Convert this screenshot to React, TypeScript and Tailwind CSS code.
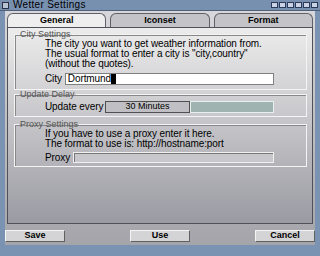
export default function App() {
  return (
    <div
      className="flex h-[256px] w-[320px] flex-col overflow-hidden bg-[#7b93b3] text-black"
      style={{ fontFamily: '"Liberation Sans", Arial, sans-serif' }}
    >
      {/* Title bar */}
      <div className="flex h-[11px] items-center border-b border-[#50607a] bg-[#7890b0] px-[2px]">
        <div className="h-[7px] w-[7px] border border-[#2a3040] bg-[#b8c4d4]" />
        <span className="ml-[4px] text-[10px] leading-[10px] tracking-[0.3px]">Wetter Settings</span>
        <div className="ml-auto flex gap-[1px]">
          {[0, 1, 2, 3, 4, 5].map((i) => (
            <div key={i} className="h-[6px] w-[7px] border border-[#2a3a58] bg-[#c8d4e4]" />
          ))}
        </div>
      </div>

      {/* Window body */}
      <div className="mx-[5px] flex h-[234px] flex-col whitespace-nowrap bg-gradient-to-b from-[#d8d8dc] to-[#a4a4aa] pt-[2px] tracking-[-0.1px]">
        {/* Tabs */}
        <div className="flex h-[14px] gap-[4px] px-[2px] tracking-normal">
          <div className="flex flex-1 items-center justify-center rounded-t-[6px] border border-b-0 border-[#606068] bg-[#eeeeee] text-[9px] font-bold">
            General
          </div>
          <div className="flex flex-1 items-center justify-center rounded-t-[6px] border border-b-0 border-[#606068] bg-[#c4c4c8] text-[9px] font-bold">
            Iconset
          </div>
          <div className="flex flex-1 items-center justify-center rounded-t-[6px] border border-b-0 border-[#606068] bg-[#c4c4c8] text-[9px] font-bold">
            Format
          </div>
        </div>

        {/* Tab page */}
        <div className="mx-[2px] flex h-[197px] flex-col border border-[#505058] bg-gradient-to-b from-[#ececec] via-[#c4c4c8] to-[#9a9aa2] pl-[6px] pr-[5px] pt-[2px]">
          {/* City Settings */}
          <fieldset className="min-w-0 border border-[#f4f4f4] pb-[3px] pl-[30px] pr-[32px] shadow-[inset_1px_1px_0_#888]">
            <legend className="-ml-[26px] px-[1px] text-[9px] leading-[9px] tracking-normal text-[#555]">City Settings</legend>
            <div className="text-[10px] leading-[10px]">
              <p>The city you want to get weather information from.</p>
              <p>The usual format to enter a city is "city,country"</p>
              <p>(without the quotes).</p>
            </div>
            <div className="mt-[2px] flex items-center gap-[3px] text-[10px]">
              <span>City</span>
              <div className="flex h-[12px] flex-1 items-center border border-[#808080] bg-white pl-[2px] leading-[10px]">
                Dortmund
                <span className="inline-block h-[10px] w-[5px] bg-black" />
              </div>
            </div>
          </fieldset>

          {/* Update Delay */}
          <fieldset className="min-w-0 border border-[#f4f4f4] pb-[2px] pl-[30px] pr-[32px] shadow-[inset_1px_1px_0_#888]">
            <legend className="-ml-[26px] px-[1px] text-[9px] leading-[9px] tracking-normal text-[#555]">Update Delay</legend>
            <div className="flex items-center text-[10px]">
              <span className="w-[60px] shrink-0">Update every</span>
              <div className="flex h-[12px] w-[85px] shrink-0 items-center justify-center border border-[#505050] bg-[#c0c0c4] text-[9px] tracking-normal">
                30 Minutes
              </div>
              <div className="h-[12px] flex-1 border border-[#e8f0ee] bg-[#9fb3b0]" />
            </div>
          </fieldset>

          {/* Proxy Settings */}
          <fieldset className="mt-[3px] min-w-0 border border-[#f4f4f4] pb-[1px] pl-[30px] pr-[32px] shadow-[inset_1px_1px_0_#888]">
            <legend className="-ml-[26px] px-[1px] text-[9px] leading-[9px] tracking-normal text-[#555]">Proxy Settings</legend>
            <div className="text-[10px] leading-[10px]">
              <p>If you have to use a proxy enter it here.</p>
              <p>The format to use is: http://hostname:port</p>
            </div>
            <div className="mt-[1px] flex items-center gap-[3px] text-[10px]">
              <span>Proxy</span>
              <div className="h-[11px] flex-1 border border-[#f0f0f0] bg-[#c8c8cc] shadow-[inset_1px_1px_0_#777]" />
            </div>
          </fieldset>
        </div>

        {/* Buttons */}
        <div className="flex items-center justify-between pt-[6px] tracking-normal">
          {["Save", "Use", "Cancel"].map((b) => (
            <div
              key={b}
              className="flex h-[12px] w-[60px] items-center justify-center border border-[#f4f4f4] border-b-[#606060] border-r-[#606060] bg-[#d4d4d6] text-[9px] font-bold"
            >
              {b}
            </div>
          ))}
        </div>
      </div>
    </div>
  );
}
